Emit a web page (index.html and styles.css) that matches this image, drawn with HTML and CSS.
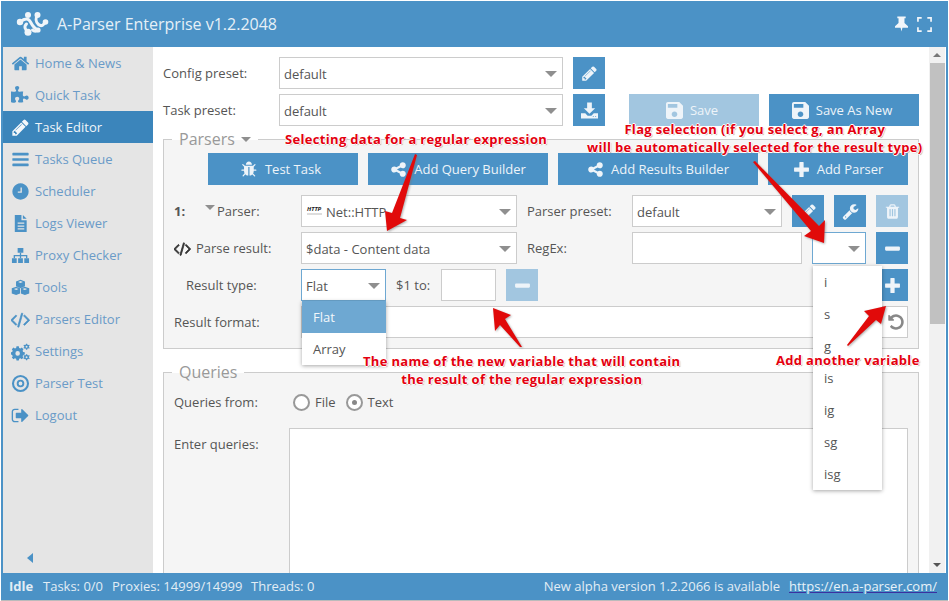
FILE: index.html
```html
<!DOCTYPE html>
<html lang="en">
<head>
<meta charset="utf-8">
<title>A-Parser Enterprise</title>
<link rel="stylesheet" href="styles.css">
</head>
<body>
<svg class="defs" width="0" height="0" aria-hidden="true">
  <symbol id="i-home" viewBox="0 0 1792 1792"><path d="M1472 992v480q0 26-19 45t-45 19h-384v-384h-256v384h-384q-26 0-45-19t-19-45v-480q0-1 .5-3t.5-3l575-474 575 474q1 2 1 6zm223-69l-62 74q-8 9-21 11h-3q-13 0-21-7l-692-577-692 577q-12 8-24 7-13-2-21-11l-62-74q-8-10-7-23.500t11-21.500l719-599q32-26 76-26t76 26l244 204v-195q0-14 9-23t23-9h192q14 0 23 9t9 23v408l219 182q10 8 11 21.500t-7 23.500z"/></symbol>
  <symbol id="i-puzzle" viewBox="0 0 1792 1792"><path d="M1664 1098q0 81-44.500 135t-123.500 54q-41 0-77.500-17.500t-59-38-56.500-38-71-17.500q-110 0-110 124 0 39 16 115t15 115v5q-22 0-33 1-34 3-97.500 11.500t-115.500 13.500-98 5q-61 0-103-26.500t-42-83.500q0-37 17.500-71t38-56.500 38-59 17.500-77.500q0-79-54-123.500t-135-44.500q-84 0-143 45.500t-59 127.500q0 43 15 83t33.500 64.500 33.500 53 15 50.500q0 45-46 89-37 35-117 35-95 0-245-24-9-2-27.500-4t-27.500-4l-13-2q-1 0-3-1-2 0-2-1v-1024q2 1 17.500 3.500t34 5 21.500 3.500q150 24 245 24 80 0 117-35 46-44 46-89 0-22-15-50.500t-33.500-53-33.500-64.500-15-83q0-82 59-127.500t144-45.500q80 0 134 44.500t54 123.500q0 41-17.500 77.500t-38 59-38 56.500-17.500 71q0 57 42 83.500t103 26.500q64 0 180-15t163-17v2q-1 2-3.500 17.500t-5 34-3.500 21.500q-24 150-24 245 0 80 35 117 44 46 89 46 22 0 50.500-15t53-33.500 64.500-33.500 83-15q82 0 127.500 59t45.500 143z"/></symbol>
  <symbol id="i-pencil" viewBox="0 0 1792 1792"><path d="M491 1536l91-91-235-235-91 91v107h128v128h107zm523-928q0-22-22-22-10 0-17 7l-542 542q-7 7-7 17 0 22 22 22 10 0 17-7l542-542q7-7 7-17zm-54-192l416 416-832 832h-416v-416zm683 96q0 53-37 90l-166 166-416-416 166-165q36-38 90-38 53 0 91 38l235 234q37 39 37 91z"/></symbol>
  <symbol id="i-bars" viewBox="0 0 1792 1792"><path d="M1664 1344v128q0 26-19 45t-45 19h-1408q-26 0-45-19t-19-45v-128q0-26 19-45t45-19h1408q26 0 45 19t19 45zm0-512v128q0 26-19 45t-45 19h-1408q-26 0-45-19t-19-45v-128q0-26 19-45t45-19h1408q26 0 45 19t19 45zm0-512v128q0 26-19 45t-45 19h-1408q-26 0-45-19t-19-45v-128q0-26 19-45t45-19h1408q26 0 45 19t19 45z"/></symbol>
  <symbol id="i-clock" viewBox="0 0 1792 1792"><path fill-rule="evenodd" d="M1024 544v448q0 14-9 23t-23 9h-320q-14 0-23-9t-9-23v-64q0-14 9-23t23-9h224v-352q0-14 9-23t23-9h64q14 0 23 9t9 23zm640 352q0 209-103 385.500t-279.500 279.500-385.500 103-385.500-103-279.500-279.500-103-385.500 103-385.500 279.500-279.500 385.500-103 385.500 103 279.500 279.500 103 385.500z"/></symbol>
  <symbol id="i-file" viewBox="0 0 16 20"><path fill-rule="evenodd" d="M2 1h7v5.500h5.500V19H2zM10.500 1l4 4h-4zM5 9v1.300h7V9zm0 3v1.300h7V12zm0 3v1.300h7V15z"/></symbol>
  <symbol id="i-sitemap" viewBox="0 0 20 18"><path d="M7 1h6v5H7zM1 12h5v5H1zM7.500 12h5v5h-5zM14 12h5v5h-5z"/><path d="M9.300 6h1.400v2.500h6.500V12h-1.400V9.900h-5.100V12H9.300V9.900H4.200V12H2.800V8.500h6.500z"/></symbol>
  <symbol id="i-cubes" viewBox="0 0 20 18"><path fill-rule="evenodd" d="M10 .8l4.700 1.800v5.200l-4.700 1.900-4.700-1.900V2.600zM7.500 3.200L10 4.200l2.500-1-2.500-1zM5.500 8.300l4 1.600v5.300L5.400 17 .8 15.200V9.900zM3 10.700l2.500 1 2.400-1-2.400-1zM14.500 8.300l4.700 1.600v5.300L14.600 17l-4.200-1.800V9.900zM12 10.700l2.500 1 2.500-1-2.500-1z"/></symbol>
  <symbol id="i-code" viewBox="0 0 1848 1792"><path d="M553 1399l-50 50q-10 10-23 10t-23-10l-466-466q-10-10-10-23t10-23l466-466q10-10 23-10t23 10l50 50q10 10 10 23t-10 23l-393 393 393 393q10 10 10 23t-10 23zm591-1067l-373 1291q-4 13-15.500 19.500t-23.500 2.500l-62-17q-13-4-19.500-15.500t-2.500-24.500l373-1291q4-13 15.500-19.500t23.500-2.500l62 17q13 4 19.500 15.500t2.500 24.500zm657 651l-466 466q-10 10-23 10t-23-10l-50-50q-10-10-10-23t10-23l393-393-393-393q-10-10-10-23t10-23l50-50q10-10 23-10t23 10l466 466q10 10 10 23t-10 23z"/></symbol>
  <symbol id="i-gears" viewBox="0 0 20 18"><path fill-rule="evenodd" d="M5.800 3.500h2.400l.4 1.700 1.300.6 1.500-.9 1.700 1.700-.9 1.500.6 1.300 1.700.4v2.400l-1.700.4-.6 1.300.9 1.500-1.700 1.700-1.500-.9-1.300.5-.4 1.700H5.800l-.4-1.700-1.300-.5-1.500.9L.9 15.400l.9-1.500-.6-1.300-1.200-.4V9.800l1.200-.4.6-1.300-.9-1.500 1.700-1.700 1.500.9 1.300-.6zM7 8.600a2.400 2.400 0 1 0 0 4.800 2.400 2.400 0 0 0 0-4.800z"/><path fill-rule="evenodd" d="M15.800 .8h1.200l.3 1 .8.400 1-.4.6 1-.8.700v.9l.8.700-.6 1-1-.4-.8.400-.3 1h-1.200l-.3-1-.8-.4-1 .4-.6-1 .8-.7v-.9l-.8-.7.6-1 1 .4.800-.4zM16.400 3a1 1 0 1 0 0 2 1 1 0 0 0 0-2zM15.800 11.800h1.200l.3 1 .8.400 1-.4.6 1-.8.700v.9l.8.700-.6 1-1-.4-.8.400-.3 1h-1.200l-.3-1-.8-.4-1 .4-.6-1 .8-.7v-.9l-.8-.7.6-1 1 .4.800-.4zM16.400 14a1 1 0 1 0 0 2 1 1 0 0 0 0-2z"/></symbol>
  <symbol id="i-target" viewBox="0 0 20 20"><path fill-rule="evenodd" d="M10 1a9 9 0 1 1 0 18 9 9 0 0 1 0-18zm0 2.200a6.800 6.800 0 1 0 0 13.600 6.800 6.800 0 0 0 0-13.600zM10 6a4 4 0 1 1 0 8 4 4 0 0 1 0-8zm0 2a2 2 0 1 0 0 4 2 2 0 0 0 0-4z"/></symbol>
  <symbol id="i-logout" viewBox="0 0 1792 1792"><path d="M704 1440q0 4 1 20t.5 26.500-3 23.500-10 19.500-20.500 6.500h-320q-119 0-203.500-84.500t-84.500-203.500v-704q0-119 84.500-203.500t203.500-84.500h320q13 0 22.500 9.500t9.500 22.500q0 4 1 20t.5 26.500-3 23.500-10 19.500-20.500 6.500h-320q-66 0-113 47t-47 113v704q0 66 47 113t113 47h312l11.500 1 11.500 3 8 5.500 7 9 2 13.500zm928-544q0 26-19 45l-544 544q-19 19-45 19t-45-19-19-45v-288h-448q-26 0-45-19t-19-45v-384q0-26 19-45t45-19h448v-288q0-26 19-45t45-19 45 19l544 544q19 19 19 45z"/></symbol>
  <symbol id="i-save" viewBox="3 3 18 18"><path d="M17 3H5c-1.110 0-2 .9-2 2v14c0 1.100.89 2 2 2h14c1.100 0 2-.9 2-2V7l-4-4zm-5 16c-1.660 0-3-1.340-3-3s1.340-3 3-3 3 1.340 3 3-1.340 3-3 3zm3-10H5V5h10v4z"/></symbol>
  <symbol id="i-download" viewBox="0 0 18 18"><path d="M6.500 .5h5v6H15l-6 6-6-6h3.500z"/><path fill-rule="evenodd" d="M0 12h4.500L7 14.500h4L13.500 12H18v5.500H0zM12.500 15v1h1v-1zm2.500 0v1h1v-1z"/></symbol>
  <symbol id="i-bug" viewBox="0 0 1792 1792"><path d="M1632 960q0 26-19 45t-45 19h-224q0 171-67 290l208 209q19 19 19 45t-19 45q-18 19-45 19t-45-19l-198-197q-5 5-15 13t-42 28.500-65 36.500-82 29-97 13v-896h-128v896q-51 0-101.500-13.500t-87-33-66-39-43.500-32.500l-15-14-183 207q-20 21-48 21-24 0-43-16-19-18-20.500-44.500t15.500-46.500l202-227q-58-114-58-274h-224q-26 0-45-19t-19-45 19-45 45-19h224v-294l-173-173q-19-19-19-45t19-45 45-19 45 19l173 173h844l173-173q19-19 45-19t45 19 19 45-19 45l-173 173v294h224q26 0 45 19t19 45zm-480-576h-640q0-133 93.500-226.500t226.500-93.500 226.500 93.500 93.500 226.500z"/></symbol>
  <symbol id="i-share" viewBox="0 0 1792 1792"><path d="M1344 1024q133 0 226.500 93.500t93.500 226.500-93.500 226.500-226.500 93.500-226.500-93.500-93.500-226.500q0-12 2-34l-360-180q-92 86-218 86-133 0-226.500-93.500t-93.500-226.500 93.500-226.500 226.500-93.500q126 0 218 86l360-180q-2-22-2-34 0-133 93.500-226.500t226.500-93.500 226.500 93.500 93.500 226.500-93.500 226.500-226.500 93.500q-126 0-218-86l-360 180q2 22 2 34t-2 34l360 180q92-86 218-86z"/></symbol>
  <symbol id="i-plus" viewBox="0 0 16 16"><path d="M6.500 1h3q.5 0 .5.500V6h4.500q.5 0 .5.500v3q0 .5-.5.500H10v4.500q0 .5-.5.500h-3q-.5 0-.5-.5V10H1.500q-.5 0-.5-.5v-3q0-.5.500-.5H6V1.500q0-.5.500-.5z"/></symbol>
  <symbol id="i-minus" viewBox="0 0 16 16"><rect x="1" y="6" width="14" height="4" rx="1"/></symbol>
  <symbol id="i-wrench" viewBox="0 0 1792 1792"><path d="M448 1472q0-26-19-45t-45-19-45 19-19 45 19 45 45 19 45-19 19-45zm644-420l-682 682q-37 37-90 37-52 0-91-37l-106-108q-38-36-38-90 0-53 38-91l681-681q39 98 114.500 173.500t173.500 114.500zm634-435q0 39-23 106-47 134-164.500 217.500t-258.500 83.500q-185 0-316.500-131.500t-131.500-316.500 131.500-316.500 316.500-131.500q58 0 121.500 16.500t107.500 46.500q16 11 16 28t-16 28l-293 169v224l193 107q5-3 79-48.500t135.500-81 70.500-35.500q15 0 23.500 10t8.500 25z"/></symbol>
  <symbol id="i-trash" viewBox="0 0 1792 1792"><path d="M704 1376v-704q0-14-9-23t-23-9h-64q-14 0-23 9t-9 23v704q0 14 9 23t23 9h64q14 0 23-9t9-23zm256 0v-704q0-14-9-23t-23-9h-64q-14 0-23 9t-9 23v704q0 14 9 23t23 9h64q14 0 23-9t9-23zm256 0v-704q0-14-9-23t-23-9h-64q-14 0-23 9t-9 23v704q0 14 9 23t23 9h64q14 0 23-9t9-23zm-544-992h448l-48-117q-7-9-17-11h-317q-10 2-17 11zm928 32v64q0 14-9 23t-23 9h-96v948q0 83-47 143.500t-113 60.500h-832q-66 0-113-58.500t-47-141.500v-952h-96q-14 0-23-9t-9-23v-64q0-14 9-23t23-9h309l70-167q15-37 54-63t79-26h320q40 0 79 26t54 63l70 167h309q14 0 23 9t9 23z"/></symbol>
  <symbol id="i-undo" viewBox="0 0 1792 1792"><path d="M1664 896q0 156-61 298t-164 245-245 164-298 61q-172 0-327-72.500t-264-204.500q-7-10-6.500-22.500t8.500-20.500l137-138q10-9 25-9 16 2 23 12 73 95 179 147t225 52q104 0 198.500-40.500t163.500-109.500 109.500-163.500 40.500-198.500-40.500-198.500-109.500-163.500-163.500-109.500-198.500-40.500q-98 0-188 35.500t-160 101.500l137 138q31 30 14 69-17 40-59 40h-448q-26 0-45-19t-19-45v-448q0-42 40-59 39-17 69 14l130 129q107-101 244.500-156.500t284.500-55.500q156 0 298 61t245 164 164 245 61 298z"/></symbol>
</svg>

<div class="window">
  <header class="titlebar">
    <svg class="logo" viewBox="0 0 32 24">
      <g class="logo-lines"><path d="M4 10C8 6 12 6 14 10S18 17 22 18"/><path d="M12 20C8 18 7.500 14 10 12"/><path d="M21 3C19 6 19 10 22 12.500S27 13 29 10"/><path d="M16 18C18 20 21 19 22 18"/></g>
      <circle cx="3.500" cy="10" r="3.200"/><circle cx="11.500" cy="3" r="3"/><circle cx="21" cy="3" r="3"/><circle cx="29" cy="10" r="2.800"/><circle cx="11.500" cy="20.300" r="3.500"/><circle cx="21.500" cy="18" r="2.600"/>
    </svg>
    <span class="title">A-Parser Enterprise v1.2.2048</span>
    <span class="title-tools">
      <svg class="pin" viewBox="0 0 14 16"><path d="M2.500 0h9v1.700h-1.300V7L14 10.500V12H8L7 16l-1-4H0v-1.500L3.800 7V1.700H2.500z"/></svg>
      <svg class="expand" viewBox="0 0 16 16"><path d="M1 5V1h4M11 1h4v4M15 11v4h-4M5 15H1v-4"/></svg>
    </span>
  </header>

  <div class="middle">
    <nav class="sidebar">
      <a class="nav-item"><svg class="nav-icon"><use href="#i-home"/></svg>Home &amp; News</a>
      <a class="nav-item"><svg class="nav-icon"><use href="#i-puzzle"/></svg>Quick Task</a>
      <a class="nav-item active"><svg class="nav-icon"><use href="#i-pencil"/></svg>Task Editor</a>
      <a class="nav-item"><svg class="nav-icon"><use href="#i-bars"/></svg>Tasks Queue</a>
      <a class="nav-item"><svg class="nav-icon"><use href="#i-clock"/></svg>Scheduler</a>
      <a class="nav-item"><svg class="nav-icon"><use href="#i-file"/></svg>Logs Viewer</a>
      <a class="nav-item"><svg class="nav-icon"><use href="#i-sitemap"/></svg>Proxy Checker</a>
      <a class="nav-item"><svg class="nav-icon"><use href="#i-cubes"/></svg>Tools</a>
      <a class="nav-item"><svg class="nav-icon bold"><use href="#i-code"/></svg>Parsers Editor</a>
      <a class="nav-item"><svg class="nav-icon"><use href="#i-gears"/></svg>Settings</a>
      <a class="nav-item"><svg class="nav-icon"><use href="#i-target"/></svg>Parser Test</a>
      <a class="nav-item"><svg class="nav-icon"><use href="#i-logout"/></svg>Logout</a>
      <span class="collapse"></span>
    </nav>

    <main class="content">
      <div class="preset-row">
        <label class="preset-label">Config preset:</label>
        <div class="select w284"><span>default</span><i class="caret"></i></div>
        <button class="btn sq"><svg><use href="#i-pencil"/></svg></button>
      </div>
      <div class="preset-row second">
        <label class="preset-label">Task preset:</label>
        <div class="select w284"><span>default</span><i class="caret"></i></div>
        <button class="btn sq"><svg><use href="#i-download"/></svg></button>
        <button class="btn save faded"><svg><use href="#i-save"/></svg>Save</button>
        <button class="btn save-new"><svg><use href="#i-save"/></svg>Save As New</button>
      </div>

      <section class="group parsers">
        <div class="legend"><span>Parsers</span><i class="caret legend-caret"></i></div>
        <div class="action-row">
          <button class="btn w150"><svg><use href="#i-bug"/></svg>Test Task</button>
          <button class="btn w180"><svg><use href="#i-share"/></svg>Add Query Builder</button>
          <button class="btn w200"><svg><use href="#i-share"/></svg>Add Results Builder</button>
          <button class="btn w140"><svg><use href="#i-plus"/></svg>Add Parser</button>
        </div>
        <div class="form-row">
          <div class="lead"><b class="num">1:</b><i class="caret small"></i><span class="parser-lbl">Parser:</span></div>
          <div class="select w216"><span class="http">HTTP</span><span>Net::HTTP</span><i class="caret"></i></div>
          <label class="mid-label">Parser preset:</label>
          <div class="select w150"><span>default</span><i class="caret"></i></div>
          <button class="btn sq"><svg><use href="#i-pencil"/></svg></button>
          <button class="btn sq"><svg><use href="#i-wrench"/></svg></button>
          <button class="btn sq faded"><svg><use href="#i-trash"/></svg></button>
        </div>
        <div class="form-row">
          <div class="lead"><svg class="code-ico"><use href="#i-code"/></svg><span class="result-lbl">Parse result:</span></div>
          <div class="select w216"><span>$data - Content data</span><i class="caret"></i></div>
          <label class="mid-label">RegEx:</label>
          <div class="input w170"></div>
          <div class="select flag open"><i class="caret"></i></div>
          <button class="btn sq"><svg><use href="#i-minus"/></svg></button>
        </div>
        <div class="form-row">
          <div class="lead"><span class="type-lbl">Result type:</span></div>
          <div class="select w85 open"><span>Flat</span><i class="caret"></i></div>
          <label class="to-label">$1 to:</label>
          <div class="input w55"></div>
          <button class="btn sq faded"><svg><use href="#i-minus"/></svg></button>
          <span class="grow"></span>
          <button class="btn sq"><svg><use href="#i-plus"/></svg></button>
        </div>
        <div class="form-row">
          <div class="lead">Result format:</div>
          <div class="input format"><svg class="undo"><use href="#i-undo"/></svg></div>
        </div>

        <ul class="menu menu-type">
          <li class="selected">Flat</li>
          <li>Array</li>
        </ul>
        <ul class="menu menu-flag">
          <li>i</li><li>s</li><li>g</li><li>is</li><li>ig</li><li>sg</li><li>isg</li>
        </ul>
      </section>

      <section class="group queries">
        <div class="legend"><span>Queries</span></div>
        <div class="radio-row">
          <span class="q-label">Queries from:</span>
          <span class="radio"></span><span class="radio-txt">File</span>
          <span class="radio on"></span><span class="radio-txt">Text</span>
        </div>
        <div class="enter-row">
          <span class="enter-label">Enter queries:</span>
          <div class="textarea"></div>
        </div>
      </section>
    </main>

    <div class="scrollbar">
      <i class="sb-up"></i>
      <div class="sb-track"><div class="sb-thumb"></div></div>
      <i class="sb-down"></i>
    </div>
  </div>

  <footer class="statusbar">
    <b class="idle">Idle</b><span class="s1">Tasks: 0/0</span><span class="s2">Proxies: 14999/14999</span><span class="s3">Threads: 0</span>
    <span class="grow"></span>
    <span class="alpha">New alpha version 1.2.2066 is available</span><a class="site">https://en.a-parser.com/</a>
  </footer>
</div>

<svg class="arrows" viewBox="0 0 949 601">
  <path d="M415 154L417 155L400 218L407 220L387 231L385 211L392 213Z"/>
  <path d="M753 162L755 161L819 226L825 220L824 243L804 236L811 231Z"/>
  <path d="M522 347L520 347L500 325L495 331L493 308L511 315L505 319Z"/>
  <path d="M848 346L847 345L869 316L864 311L886 306L881 324L876 320Z"/>
</svg>
<p class="note n1">Selecting data for a regular expression</p>
<p class="note n2">Flag selection (if you select g, an Array<br>will be automatically selected for the result type)</p>
<p class="note n3">The name of the new variable that will contain<br>the result of the regular expression</p>
<p class="note n4">Add another variable</p>
</body>
</html>
```

FILE: styles.css
```css
* { box-sizing: border-box; }
html, body { margin: 0; padding: 0; width: 949px; height: 601px; overflow: hidden; background: #fff; }
body { position: relative; font: 13px/18px "Open Sans", "Noto Sans", sans-serif; color: #555; }
.defs { position: absolute; }
svg { fill: currentColor; display: block; }
i { display: block; }
ul { list-style: none; margin: 0; padding: 0; }
button { font: inherit; margin: 0; border: 0; }

.window { margin: 1px 1px 0 1px; width: 947px; height: 599px; display: flex; flex-direction: column; border: solid #4b92c6; border-width: 0 2px; background: #fff; box-shadow: 0 1px 0 #bbb; }
.titlebar { flex: 0 0 46px; background: #4b92c6; color: #e6f0f7; display: flex; align-items: center; padding-left: 13px; }
.logo { width: 33px; height: 24px; fill: #f0f5f9; margin-right: 8px; }
.logo-lines path { fill: none; stroke: #f0f5f9; stroke-width: 3; stroke-linecap: round; }
.title { font-size: 16px; }
.title-tools { margin-left: auto; display: flex; align-items: center; gap: 9px; margin-right: 14px; }
.pin { width: 13px; height: 16px; fill: #f2f6fa; }
.expand { width: 15px; height: 15px; }
.expand path { fill: none; stroke: #f2f6fa; stroke-width: 1.800; }

.middle { flex: 1; display: flex; min-height: 0; }
.sidebar { flex: 0 0 150px; background: #e5e5e5; position: relative; }
.nav-item { height: 32px; display: flex; align-items: center; padding-left: 8px; color: #6a9bc8; gap: 5px; }
.nav-icon { width: 19px; height: 19px; color: #4b92c6; }
.nav-icon.bold { stroke: #4b92c6; stroke-width: 70; }
.nav-item.active { background: #3b85bb; color: #f0f5f9; }
.nav-item.active .nav-icon { color: #f4f7fa; }
.collapse { position: absolute; left: 24px; top: 506px; border: solid transparent; border-width: 5px 6px 5px 0; border-right-color: #4b92c6; }

.content { flex: 0 0 776px; width: 776px; padding: 10px 0 0 10px; overflow: hidden; background: #fff; position: relative; }
.select, .input { height: 32px; background: #fff; border: 1px solid #ccc; position: relative; flex: none; }
.select { display: flex; align-items: center; padding: 2px 0 0 4px; color: #555; }
.caret { border: solid transparent; border-width: 6px 6px 0; border-top-color: #8f8f8f; position: absolute; top: 13px; right: 4px; width: 0; height: 0; }
.select .caret { right: 5px; }
.w284 { width: 284px; }
.w216 { width: 216px; }
.w150 { width: 150px; }
.w170 { width: 170px; }
.w85 { width: 85px; }
.w55 { width: 55px; }
.btn { height: 32px; background: #4b92c6; color: #eef4f9; display: flex; align-items: center; justify-content: center; gap: 7px; flex: none; padding: 0; font-size: 13px; }
.btn svg { width: 17px; height: 17px; }
.sq { width: 32px; }
.faded { background: #a2c6e0; }
.w150.btn { width: 150px; padding-right: 4px; }
.w180 { width: 180px; }
.w200 { width: 200px; }
.w140 { width: 140px; }

.preset-row { display: flex; align-items: center; height: 32px; }
.preset-row.second { margin-top: 5px; }
.preset-label { width: 116px; }
.preset-row .btn.sq { margin-left: 10px; }
.save { width: 130px; margin-left: 24px; padding-right: 4px; }
.save-new { width: 150px; margin-left: 10px; padding-right: 4px; }

.group { position: relative; border: 1px solid #ccc; width: 756px; background: #f5f5f5; padding: 0 10px; }
.legend { position: absolute; left: 8px; top: -13px; height: 24px; padding: 0 7px; display: flex; align-items: center; gap: 6px; background: linear-gradient(#fff 13px, #f5f5f5 13px); font-size: 16px; color: #999; }
.legend-caret { position: static; border-width: 5px 5px 0; }
.parsers { margin-top: 13px; height: 210px; padding-top: 13px; }
.action-row { display: flex; gap: 10px; padding-left: 34px; }
.form-row { display: flex; align-items: center; height: 32px; margin-top: 5px; }
.action-row + .form-row { margin-top: 10px; }
.lead { width: 127px; display: flex; align-items: center; flex: none; position: relative; }
.num { font-weight: 700; width: 31px; }
.caret.small { position: static; border-width: 5px 5px 0; margin-top: -7px; margin-right: 2px; }
.code-ico { width: 17px; height: 17px; color: #333; stroke: #333; stroke-width: 90; margin-right: 5px; }
.type-lbl { margin-left: 12px; }
.mid-label { width: 105px; margin-left: 10px; flex: none; }
.form-row > .btn.sq { margin-left: 10px; }
.flag { width: 54px; margin-left: 10px; }
.open { border-color: #6ea8d2; }
.to-label { margin-left: 10px; width: 45px; flex: none; }
.grow { flex: 1; }
.format { flex: 1; }
.undo { position: absolute; right: 2px; top: 6px; width: 18px; height: 18px; color: #888; }
.http { font-size: 6px; line-height: 8px; font-weight: 700; font-style: italic; color: #222; margin: -4px 4px 0 1px; width: 15px; border-bottom: 2px solid #ddd; }

.menu { position: absolute; background: #fff; box-shadow: 0 1px 4px rgba(0,0,0,.35); z-index: 2; }
.menu li { height: 32px; line-height: 32px; padding-left: 11px; }
.menu-type { left: 138px; top: 161px; width: 84px; }
.menu-type .selected { background: #6ea8d2; color: #f2f7fb; }
.menu-flag { left: 649px; top: 126px; width: 69px; }

.queries { margin-top: 23px; height: 240px; padding-top: 19px; }
.radio-row { display: flex; align-items: center; height: 20px; }
.q-label { width: 119px; }
.radio { width: 17px; height: 17px; border: 2px solid #999; border-radius: 50%; background: #fff; position: relative; margin-right: 5px; flex: none; }
.radio.on::after { content: ""; position: absolute; left: 4px; top: 4px; width: 5px; height: 5px; border-radius: 50%; background: #888; }
.radio-txt { margin-right: 10px; }
.enter-row { display: flex; margin-top: 16px; }
.enter-label { width: 115px; padding-top: 7px; }
.textarea { width: 619px; height: 300px; background: #fff; border: 1px solid #ccc; }

.scrollbar { flex: 0 0 16px; background: #f1f1f1; position: relative; display: flex; flex-direction: column; align-items: center; }
.sb-track { flex: 1; width: 100%; }
.sb-thumb { margin: 16px 0 0 1px; height: 261px; background: #c1c1c1; }
.sb-up, .sb-down { position: absolute; left: 4px; border: solid transparent; }
.sb-up { top: 6px; border-width: 0 4px 4px; border-bottom-color: #777; }
.sb-down { bottom: 6px; border-width: 4px 4px 0; border-top-color: #555; }

.statusbar { flex: 0 0 27px; background: #4b92c6; color: #e2edf5; display: flex; align-items: center; padding: 0 9px 1px 6px; }
.idle { font-weight: 700; width: 34px; }
.s1 { width: 69px; }
.s2 { width: 139px; }
.alpha { margin-right: 9px; }
.site { color: #e8f2f9; text-decoration: underline; text-decoration-color: #3b2fa0; }

.arrows { position: absolute; left: 0; top: 0; width: 949px; height: 601px; fill: #e10a0a; z-index: 3; pointer-events: none; filter: drop-shadow(1px 1px 1px rgba(120,120,120,.6)); }
.note { position: absolute; margin: 0; z-index: 4; font-size: 13px; line-height: 18px; font-weight: 700; color: #e4000f; text-align: center; white-space: nowrap; letter-spacing: .32px; text-shadow: -1px 0 0 #fff, 1px 0 0 #fff, 0 -1px 0 #fff, 0 1px 0 #fff, 1px 1px 1px #999; }
.n1 { left: 285px; top: 130px; }
.n2 { left: 587px; top: 120px; }
.n3 { left: 363px; top: 352px; }
.n4 { left: 776px; top: 351px; }
```
